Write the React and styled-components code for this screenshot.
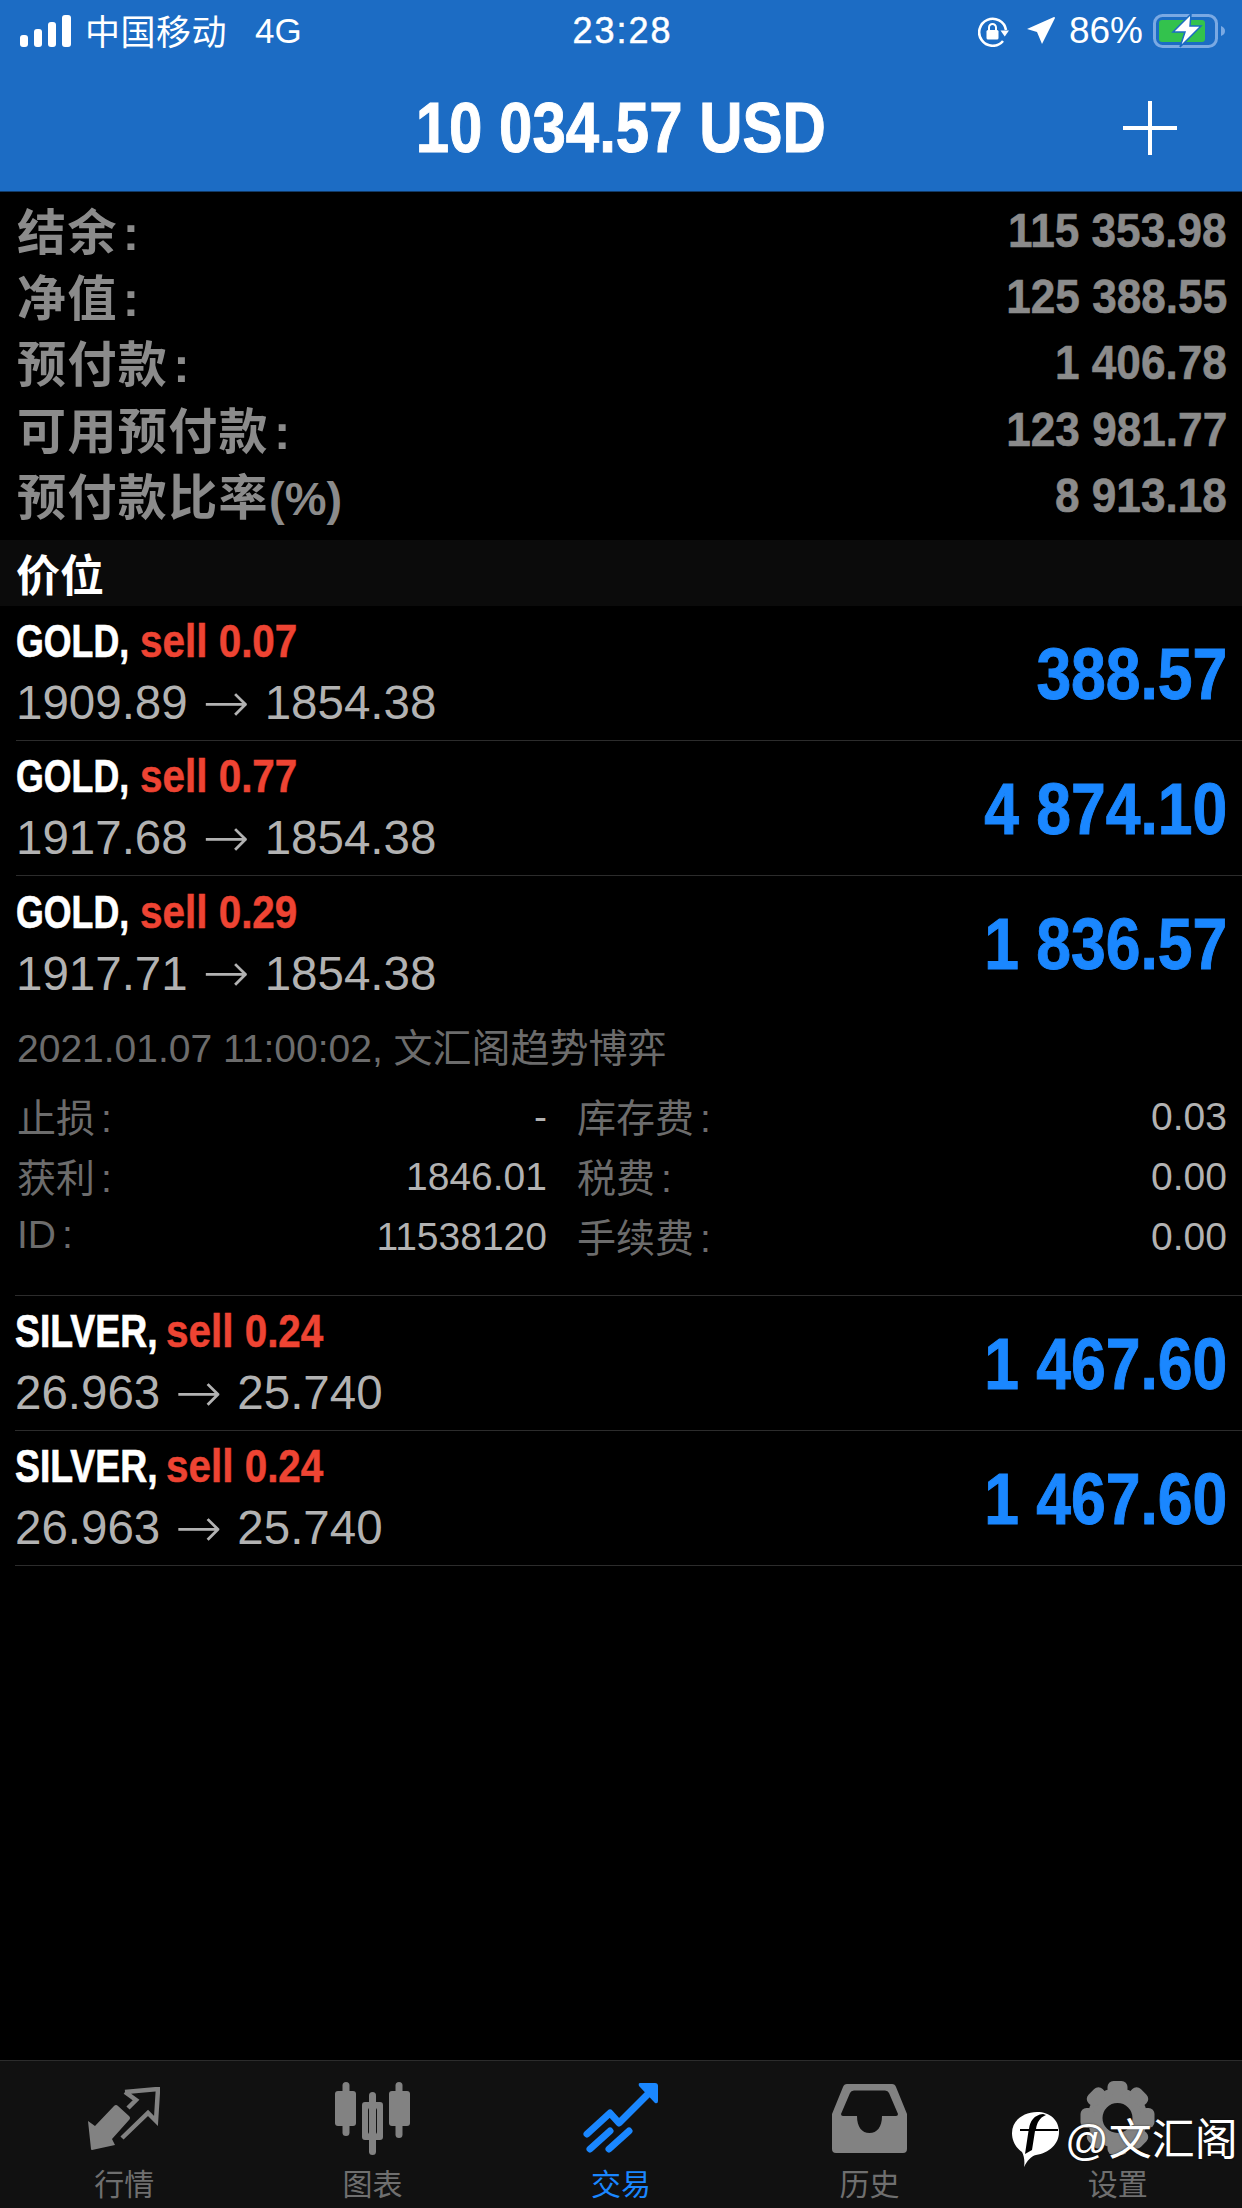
import { Fragment } from "react";
import styled, { createGlobalStyle } from "styled-components";

const GlobalStyle = createGlobalStyle`
  html, body {
    margin: 0;
    padding: 0;
    background: #000;
  }
  body {
    font-family: "Liberation Sans", "Noto Sans CJK SC", sans-serif;
  }
`;

const Page = styled.div`
  position: relative;
  width: 1242px;
  height: 2208px;
  display: flex;
  flex-direction: column;
  overflow: hidden;
  background: #000;
`;

const Header = styled.header`
  height: 192px;
  background: #1c6cc4;
  color: #fff;
  flex: none;
  box-sizing: border-box;
  border-bottom: 1px solid #123a66;
`;

const StatusBar = styled.div`
  height: 62px;
  padding: 0 17px 0 20px;
  display: grid;
  grid-template-columns: 1fr auto 1fr;
  align-items: center;
  font-size: 35px;
`;

const StatusGroup = styled.div`
  display: flex;
  align-items: center;
  justify-content: ${(p) => (p.$end ? "flex-end" : "flex-start")};
`;

const Carrier = styled.span`
  margin: -4px 0 0 14px;
  font-size: 35px;
  letter-spacing: 0.5px;
`;

const Network = styled.span`
  margin-left: 28px;
  font-size: 35px;
`;

const Clock = styled.span`
  font-size: 36px;
  letter-spacing: 2px;
  -webkit-text-stroke: 0.5px #fff;
`;

const Gap = styled.span`
  width: 18px;
`;

const Percent = styled.span`
  margin: 0 10px 0 14px;
  font-size: 37px;
`;

const TitleBar = styled.div`
  height: 129px;
  display: grid;
  grid-template-columns: 1fr auto 1fr;
  align-items: center;
`;

const Title = styled.div`
  grid-column: 2;
  font-size: 71px;
  font-weight: 700;
  white-space: nowrap;
  transform: scaleX(0.845);
  margin-top: 2px;
  -webkit-text-stroke: 1px #fff;
`;

const PlusButton = styled.div`
  grid-column: 3;
  justify-self: end;
  display: flex;
  margin: 2px 65px 0 0;
`;

const Summary = styled.section`
  height: 348px;
  box-sizing: border-box;
  padding: 5px 15px 0 17px;
  flex: none;
`;

const SummaryRow = styled.div`
  height: 66.3px;
  display: flex;
  justify-content: space-between;
  align-items: center;
  color: #8b8b8b;
  font-weight: 700;
`;

const SummaryLabel = styled.span`
  margin-top: -4px;
  font-size: 49px;
  letter-spacing: 1.4px;
`;

const Colon = styled.span`
  margin-left: ${(p) => p.$gap}px;
`;

const Percentage = styled.span`
  display: inline-block;
  letter-spacing: 0;
  font-size: 47px;
`;

const SummaryValue = styled.span`
  font-size: 48px;
  white-space: nowrap;
  transform: scaleX(0.92);
  transform-origin: right center;
  -webkit-text-stroke: 0.6px #8b8b8b;
`;

const SectionTitle = styled.div`
  height: 66px;
  flex: none;
  padding-left: 16px;
  display: flex;
  align-items: center;
  background: #0b0b0b;
  color: #fff;
  font-size: 44px;
  font-weight: 700;
`;

const Row = styled.div`
  height: 135px;
  box-sizing: border-box;
  margin-left: ${(p) => p.$inset}px;
  padding-right: 15px;
  display: flex;
  justify-content: space-between;
  align-items: center;
  border-bottom: ${(p) => (p.$open ? "none" : "1px solid #2c2c2c")};
`;

const RowLeft = styled.div`
  display: flex;
  flex-direction: column;
  gap: 10px;
`;

const NameLine = styled.div`
  height: 52px;
  margin-top: -3px;
  display: flex;
  align-items: center;
  font-size: 47px;
  font-weight: 700;
  white-space: nowrap;
`;

const Symbol = styled.span`
  color: #fff;
  display: inline-block;
  transform: scaleX(${(p) => p.$scale});
  transform-origin: left center;
  margin-right: ${(p) => p.$trim}px;
  -webkit-text-stroke: 0.7px #fff;
`;

const Side = styled.span`
  color: #ee4433;
  display: inline-block;
  transform: scaleX(0.86);
  transform-origin: left center;
  -webkit-text-stroke: 0.5px #ee4433;
`;

const Prices = styled.div`
  height: 52px;
  display: flex;
  align-items: center;
  color: #b2b2b2;
  font-size: 47.5px;
  white-space: nowrap;
`;

const Arrow = styled.span`
  width: 49px;
  margin: 0 14px;
  display: flex;
  justify-content: center;
  font-family: "DejaVu Sans", sans-serif;
  font-size: 56px;
  font-weight: 200;
  line-height: 52px;
`;

const Profit = styled.span`
  color: #1a87ff;
  font-size: 73px;
  font-weight: 700;
  white-space: nowrap;
  transform: scaleX(0.855);
  transform-origin: right center;
  -webkit-text-stroke: 1px #1a87ff;
`;

const Details = styled.div`
  height: 285px;
  box-sizing: border-box;
  margin-left: 15px;
  padding: 8px 15px 0 2px;
  border-bottom: 1px solid #2c2c2c;
`;

const OpenTime = styled.div`
  height: 52px;
  display: flex;
  align-items: center;
  color: #6c6c6c;
  font-size: 39px;
  white-space: nowrap;
`;

const DetailGrid = styled.div`
  margin-top: 16px;
  display: grid;
  grid-template-columns: 530px 1fr;
  column-gap: 30px;
  grid-auto-rows: 60px;
  font-size: 39px;
`;

const DetailCell = styled.div`
  display: flex;
  align-items: center;
  justify-content: space-between;
`;

const DetailLabel = styled.span`
  margin-top: -4px;
  color: #6c6c6c;
`;

const DetailValue = styled.span`
  color: #b2b2b2;
`;

const Spacer = styled.div`
  flex: 1;
`;

const TabBar = styled.nav`
  height: 148px;
  flex: none;
  box-sizing: border-box;
  border-top: 1px solid #2c2c2c;
  background: #111;
  display: grid;
  grid-template-columns: repeat(5, 1fr);
`;

const Tab = styled.div`
  display: flex;
  flex-direction: column;
  align-items: center;
  color: ${(p) => (p.$active ? "#1a87ff" : "#828282")};
`;

const TabIcon = styled.div`
  height: 78px;
  margin-top: 18px;
  display: flex;
  align-items: center;
  justify-content: center;
`;

const TabLabel = styled.span`
  margin-top: 10px;
  font-size: 30px;
  line-height: 36px;
  color: ${(p) => (p.$active ? "#1a87ff" : "#6f6f6f")};
`;

const Watermark = styled.div`
  position: absolute;
  left: 1012px;
  top: 2112px;
  display: flex;
  align-items: center;
  gap: 5px;
  color: #fff;
  font-size: 43px;
  line-height: 56px;
  white-space: nowrap;
  text-shadow: 0 0 2px rgba(0, 0, 0, 0.6);
`;

const Signal = () => (
  <svg width="51" height="32" viewBox="0 0 51 32" fill="#fff">
    <rect x="0" y="20" width="8" height="12" rx="3" />
    <rect x="14" y="14" width="8" height="18" rx="3" />
    <rect x="28" y="7" width="8" height="25" rx="3" />
    <rect x="42" y="0" width="9" height="32" rx="3" />
  </svg>
);

const OrientationLock = () => (
  <svg width="31" height="31" viewBox="0 0 31 31" fill="none">
    <path d="M25 25A13.5 13.5 0 1 1 28 14" stroke="#fff" strokeWidth="2.6" />
    <path d="M22.500 14.500h8.500l-4.250 6z" fill="#fff" />
    <rect x="8.500" y="14" width="12" height="9.500" rx="1.500" fill="#fff" />
    <path d="M11 14v-2.500a3.500 3.500 0 0 1 7 0V14" stroke="#fff" strokeWidth="2" />
  </svg>
);

const LocationArrow = () => (
  <svg width="28" height="28" viewBox="0 0 28 28" fill="#fff">
    <path d="M0 12L27 0Q28 0 28 1L15 27L10 15Z" />
  </svg>
);

const Battery = () => (
  <svg width="72" height="34" viewBox="0 0 72 34">
    <rect x="1.500" y="1.500" width="62" height="31" rx="8" fill="none" stroke="#7aa9e3" strokeWidth="3" />
    <rect x="6" y="6" width="46" height="22" rx="3" fill="#33c24d" />
    <path d="M68 12c3 1 4 3 4 5s-1 4-4 5z" fill="#7aa9e3" />
    <path d="M38 0L20 18H32L27 33L48 12H37Z" fill="#fff" stroke="#1c6cc4" strokeWidth="1.500" />
  </svg>
);

const Plus = () => (
  <svg width="54" height="54" viewBox="0 0 54 54" fill="#fff">
    <rect x="25" y="0" width="4" height="54" />
    <rect x="0" y="25" width="54" height="4" />
  </svg>
);

const QuotesIcon = () => (
  <svg width="72" height="63" viewBox="0 0 72 63">
    <path
      d="M26 19Q28 17 30 19L41 29Q43 31 41 33L24 52L27 58L4 63Q3 63 3 62L0 34L7 39Z"
      fill="currentColor"
    />
    <path
      d="M37 5L70 2L68 34L60 26L34 51M37 5L48 13L40 21"
      fill="none"
      stroke="currentColor"
      strokeWidth="4.500"
    />
  </svg>
);

const ChartIcon = () => (
  <svg width="75" height="73" viewBox="0 0 75 73" fill="currentColor">
    <rect x="7.500" y="0" width="7" height="54" rx="3.500" />
    <rect x="0" y="9" width="21" height="35" rx="3" />
    <rect x="34" y="10" width="7" height="63" rx="3.500" />
    <path
      fillRule="evenodd"
      d="M30 20H45Q48 20 48 23V55Q48 58 45 58H30Q27 58 27 55V23Q27 20 30 20ZM35 26Q33 26 33 28V50Q33 52 35 52H40Q42 52 42 50V28Q42 26 40 26Z"
    />
    <rect x="60.500" y="0" width="7" height="56" rx="3.500" />
    <rect x="54" y="9" width="21" height="35" rx="3" />
  </svg>
);

const TradeIcon = () => (
  <svg width="75" height="70" viewBox="0 0 75 70" fill="none">
    <path
      d="M4 51L27 30L36 40L68 8M7 66L27 48M26 66L46 48"
      stroke="currentColor"
      strokeWidth="7"
      strokeLinecap="round"
      strokeLinejoin="round"
    />
    <path d="M57 0H72Q75 0 75 3V18Q75 21 72 20L56 3Q55 0 57 0Z" fill="currentColor" />
  </svg>
);

const HistoryIcon = () => (
  <svg width="75" height="69" viewBox="0 0 75 69" fill="currentColor">
    <path
      fillRule="evenodd"
      d="M15 0H60Q63 0 64 3L75 30V65Q75 69 71 69H4Q0 69 0 65V30L11 3Q12 0 15 0ZM22 6.500Q19 6.500 18 9L9 30Q9 32 11 32H25C25 43 30 49 37.500 49C45 49 50 43 50 32H64Q66 32 66 30L57 9Q56 6.500 53 6.500Z"
    />
  </svg>
);

const gearTeeth = [0, 45, 90, 135, 180, 225, 270, 315];

const SettingsIcon = () => (
  <svg width="75" height="74" viewBox="0 0 75 74" fill="none">
    <circle cx="37.500" cy="37" r="22.500" stroke="currentColor" strokeWidth="15" />
    {gearTeeth.map((deg) => (
      <rect
        key={deg}
        x="27.500"
        y="0"
        width="20"
        height="14"
        rx="6"
        fill="currentColor"
        transform={`rotate(${deg} 37.500 37)`}
      />
    ))}
  </svg>
);

const WatermarkLogo = () => (
  <svg width="48" height="56" viewBox="0 0 48 56">
    <path
      d="M25 0C38 0 47 8 47 20C47 32 37 41 24 43C19 44 15 49 12 55C13 49 12 44 10 40C4 36 0 29 0 21C0 9 11 0 25 0Z"
      fill="#fff"
    />
    <path
      d="M31 2C22 3 18 9 17 17H8V19H16.500L13 42L20 38L23 19H46V17H24C25 11 27 6 34 3Z"
      fill="#000"
    />
  </svg>
);

const summary = [
  { label: "结余", colon: true, value: "115 353.98" },
  { label: "净值", colon: true, value: "125 388.55" },
  { label: "预付款", colon: true, value: "1 406.78" },
  { label: "可用预付款", colon: true, value: "123 981.77" },
  { label: "预付款比率", unit: "(%)", value: "8 913.18" },
];

const gold = [
  { lots: "0.07", from: "1909.89", to: "1854.38", profit: "388.57" },
  { lots: "0.77", from: "1917.68", to: "1854.38", profit: "4 874.10" },
  { lots: "0.29", from: "1917.71", to: "1854.38", profit: "1 836.57", open: true },
];

const silver = [
  { lots: "0.24", from: "26.963", to: "25.740", profit: "1 467.60" },
  { lots: "0.24", from: "26.963", to: "25.740", profit: "1 467.60" },
];

const details = [
  ["止损", "-", "库存费", "0.03"],
  ["获利", "1846.01", "税费", "0.00"],
  ["ID", "11538120", "手续费", "0.00"],
];

const tabs = [
  { label: "行情", Icon: QuotesIcon },
  { label: "图表", Icon: ChartIcon },
  { label: "交易", Icon: TradeIcon, active: true },
  { label: "历史", Icon: HistoryIcon },
  { label: "设置", Icon: SettingsIcon },
];

function Position({ symbol, scale, trim, inset, item }) {
  return (
    <Row $inset={inset} $open={item.open}>
      <RowLeft>
        <NameLine>
          <Symbol $scale={scale} $trim={trim}>
            {symbol},
          </Symbol>
          <Side>sell {item.lots}</Side>
        </NameLine>
        <Prices>
          {item.from}
          <Arrow>→</Arrow>
          {item.to}
        </Prices>
      </RowLeft>
      <Profit>{item.profit}</Profit>
    </Row>
  );
}

export default function App() {
  return (
    <Page>
      <GlobalStyle />
      <Header>
        <StatusBar>
          <StatusGroup>
            <Signal />
            <Carrier>中国移动</Carrier>
            <Network>4G</Network>
          </StatusGroup>
          <Clock>23:28</Clock>
          <StatusGroup $end>
            <OrientationLock />
            <Gap />
            <LocationArrow />
            <Percent>86%</Percent>
            <Battery />
          </StatusGroup>
        </StatusBar>
        <TitleBar>
          <Title>10 034.57 USD</Title>
          <PlusButton>
            <Plus />
          </PlusButton>
        </TitleBar>
      </Header>

      <Summary>
        {summary.map((row) => (
          <SummaryRow key={row.label}>
            <SummaryLabel>
              {row.label}
              {row.colon && <Colon $gap={5}>:</Colon>}
              {row.unit && <Percentage>{row.unit}</Percentage>}
            </SummaryLabel>
            <SummaryValue>{row.value}</SummaryValue>
          </SummaryRow>
        ))}
      </Summary>

      <SectionTitle>价位</SectionTitle>

      {gold.map((item) => (
        <Position key={item.from} symbol="GOLD" scale={0.76} trim={-25} inset={16} item={item} />
      ))}
      <Details>
        <OpenTime>2021.01.07 11:00:02, 文汇阁趋势博弈</OpenTime>
        <DetailGrid>
          {details.map(([l1, v1, l2, v2]) => (
            <Fragment key={l1}>
              <DetailCell>
                <DetailLabel>
                  {l1}
                  <Colon $gap={6}>:</Colon>
                </DetailLabel>
                <DetailValue>{v1}</DetailValue>
              </DetailCell>
              <DetailCell>
                <DetailLabel>
                  {l2}
                  <Colon $gap={6}>:</Colon>
                </DetailLabel>
                <DetailValue>{v2}</DetailValue>
              </DetailCell>
            </Fragment>
          ))}
        </DetailGrid>
      </Details>
      {silver.map((item, i) => (
        <Position key={i} symbol="SILVER" scale={0.795} trim={-28} inset={15} item={item} />
      ))}

      <Spacer />

      <TabBar>
        {tabs.map(({ label, Icon, active }) => (
          <Tab key={label} $active={active}>
            <TabIcon>
              <Icon />
            </TabIcon>
            <TabLabel $active={active}>{label}</TabLabel>
          </Tab>
        ))}
      </TabBar>

      <Watermark>
        <WatermarkLogo />
        <span>@文汇阁</span>
      </Watermark>
    </Page>
  );
}
